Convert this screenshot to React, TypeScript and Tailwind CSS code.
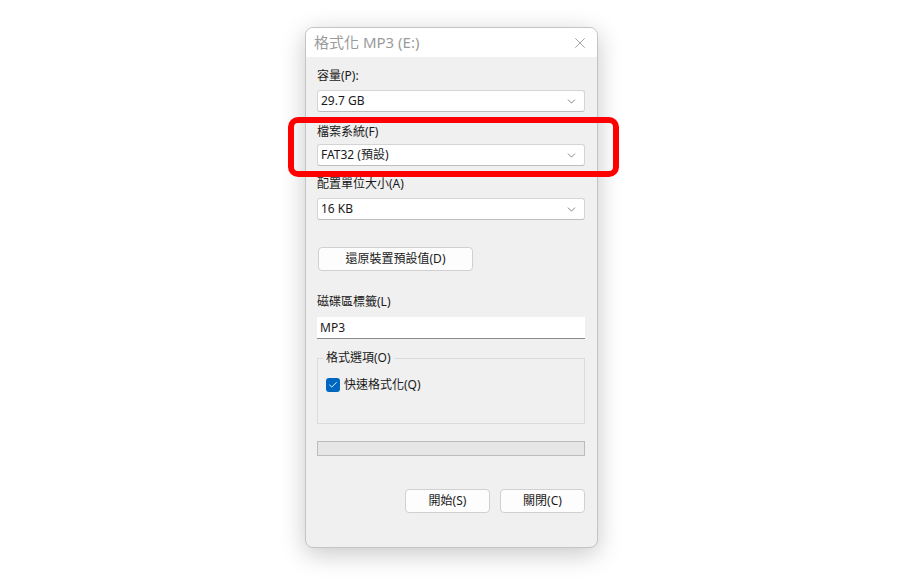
import { Check, ChevronDown, X } from 'lucide-react'

const font = { fontFamily: '"Noto Sans", "Noto Sans CJK TC", sans-serif' }

function Select({ value }: { value: string }) {
  return (
    <div className="flex h-[22px] items-center justify-between rounded-[3px] border border-[#d4d4d4] border-b-[#bdbdbd] bg-white pl-[3px] pr-[6px]">
      <span className="text-[12px] leading-none text-[#1a1a1a]">{value}</span>
      <ChevronDown className="h-[13px] w-[13px] text-[#555]" strokeWidth={1.3} />
    </div>
  )
}

function Label({ text, className }: { text: string; className: string }) {
  return <div className={`h-4 text-[12px] leading-4 text-[#1a1a1a] ${className}`}>{text}</div>
}

function Button({ text, className }: { text: string; className: string }) {
  return (
    <button className={`flex h-6 items-center justify-center rounded-[4px] border border-[#d0d0d0] bg-[#fdfdfd] text-[12px] text-[#1a1a1a] ${className}`}>
      {text}
    </button>
  )
}

export default function App() {
  return (
    <div className="relative h-[579px] w-[907px] overflow-hidden bg-white" style={font}>
      <div className="pl-[305px] pt-[27px]">
        {/* Dialog */}
        <div className="flex h-[521px] w-[293px] flex-col overflow-hidden rounded-[8px] border border-[#c4c4c4] bg-[#f0f0f0] shadow-[0_6px_24px_rgba(0,0,0,0.22)]">
          <div className="flex h-[29px] shrink-0 items-center justify-between bg-white pl-[8px] pr-[8px]">
            <span className="text-[15px] text-[#9b9b9b]">格式化 MP3 (E:)</span>
            <X className="h-[18px] w-[18px] text-[#8a8a8a]" strokeWidth={1} />
          </div>

          <div className="flex flex-col pl-[11px] pr-[12px]">
            <Label text="容量(P):" className="mt-[11px]" />
            <div className="mt-[6px]">
              <Select value="29.7 GB" />
            </div>

            <Label text="檔案系統(F)" className="mt-[12px]" />
            <div className="mt-[4px]">
              <Select value="FAT32 (預設)" />
            </div>

            <Label text="配置單位大小(A)" className="mt-[10px]" />
            <div className="mt-[6px]">
              <Select value="16 KB" />
            </div>

            <Button text="還原裝置預設值(D)" className="mt-[27px] ml-[1px] w-[155px]" />

            <Label text="磁碟區標籤(L)" className="mt-[23px]" />
            <div className="mt-[7px] flex h-[22px] items-center border-b border-[#8a8a8a] bg-white pl-[3px] text-[12px] text-[#1a1a1a]">
              MP3
            </div>

            <fieldset className="mt-[11px] h-[74px] border border-[#dcdcdc] px-[8px]">
              <legend className="ml-[-3px] px-[3px] text-[12px] leading-4 text-[#1a1a1a]">格式選項(O)</legend>
              <div className="mt-[10px] flex items-center gap-[4px]">
                <span className="flex h-[14px] w-[14px] items-center justify-center rounded-[3px] bg-[#0067c0]">
                  <Check className="h-[10px] w-[10px] text-white" strokeWidth={2.2} />
                </span>
                <span className="text-[12px] text-[#1a1a1a]">快速格式化(Q)</span>
              </div>
            </fieldset>

            <div className="mt-[17px] h-[15px] border border-[#bcbcbc] bg-[#e6e6e6]" />

            <div className="mt-[33px] flex justify-end gap-[10px]">
              <Button text="開始(S)" className="w-[85px]" />
              <Button text="關閉(C)" className="w-[85px]" />
            </div>
          </div>
        </div>
      </div>

      {/* Highlight annotation */}
      <div className="absolute left-[288px] top-[117px] h-[60px] w-[331px] rounded-[10px] border-[6px] border-[#ff0000]" />
    </div>
  )
}
